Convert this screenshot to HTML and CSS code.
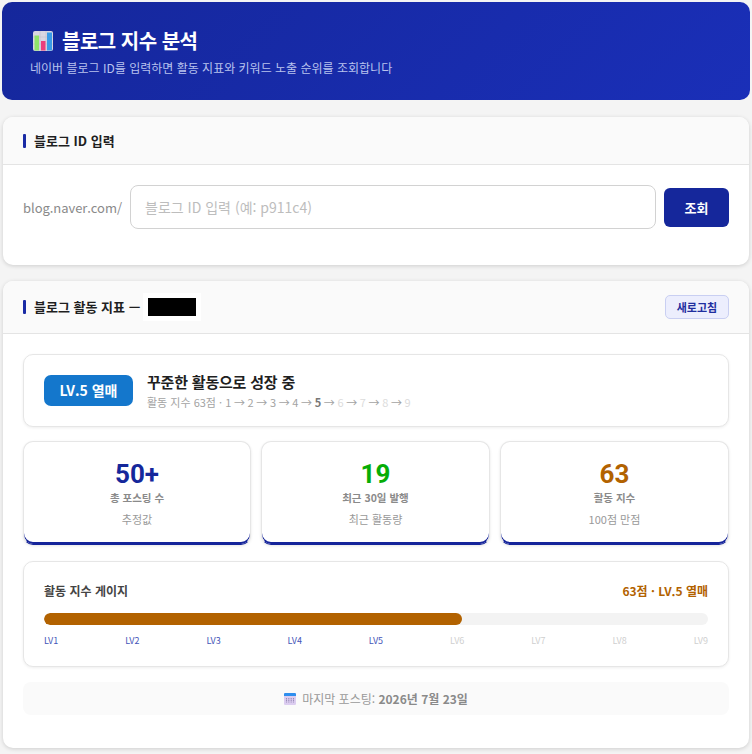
FILE: index.html
```html
<!DOCTYPE html>
<html lang="ko">
<head>
<meta charset="utf-8">
<title>블로그 지수 분석</title>
<link rel="stylesheet" href="styles.css">
</head>
<body>
<main class="page">
  <header class="banner">
    <h1 class="banner-title">
      <svg class="banner-icon" viewBox="0 0 20 20" aria-hidden="true">
        <rect x="0" y="0" width="20" height="20" rx="2" fill="#d9d6e2"/>
        <path d="M0 6h20M0 13h20M7 0v20M13 0v20" stroke="#c3bfce" stroke-width=".6"/>
        <rect x="1.5" y="4.5" width="4.5" height="15" fill="#8fe36a"/>
        <rect x="8" y="10" width="4.5" height="9.5" fill="#ec3f7c"/>
        <rect x="14" y="1.5" width="5" height="18" fill="#3a9be8"/>
      </svg>
      <span>블로그 지수 분석</span>
    </h1>
    <p class="banner-sub">네이버 블로그 ID를 입력하면 활동 지표와 키워드 노출 순위를 조회합니다</p>
  </header>

  <section class="card">
    <div class="card-head"><h2 class="card-title">블로그 ID 입력</h2></div>
    <div class="card-body search-row">
      <span class="prefix">blog.naver.com/</span>
      <input class="id-input" type="text" placeholder="블로그 ID 입력 (예: p911c4)">
      <button class="search-btn" type="button">조회</button>
    </div>
  </section>

  <section class="card">
    <div class="card-head tall">
      <h2 class="card-title">블로그 활동 지표 —</h2>
      <span class="redact"><span class="redact-fill"></span></span>
      <button class="refresh-btn" type="button">새로고침</button>
    </div>
    <div class="card-body result-body">
      <div class="panel level">
        <span class="level-badge">LV.5 열매</span>
        <div class="level-text">
          <div class="level-title">꾸준한 활동으로 성장 중</div>
          <div class="level-sub">활동 지수 63점 · <span class="steps">1 → 2 → 3 → 4 → <b>5</b> → <span class="off">6</span> → <span class="off">7</span> → <span class="off">8</span> → <span class="off">9</span></span></div>
        </div>
      </div>

      <div class="stats">
        <div class="stat">
          <div class="stat-num navy">50+</div>
          <div class="stat-label">총 포스팅 수</div>
          <div class="stat-note">추정값</div>
        </div>
        <div class="stat">
          <div class="stat-num green">19</div>
          <div class="stat-label">최근 30일 발행</div>
          <div class="stat-note">최근 활동량</div>
        </div>
        <div class="stat">
          <div class="stat-num amber">63</div>
          <div class="stat-label">활동 지수</div>
          <div class="stat-note">100점 만점</div>
        </div>
      </div>

      <div class="panel gauge">
        <div class="gauge-head">
          <span class="gauge-title">활동 지수 게이지</span>
          <span class="gauge-value">63점 · LV.5 열매</span>
        </div>
        <div class="gauge-track"><div class="gauge-fill" style="width:63%"></div></div>
        <div class="gauge-levels">
          <span class="on">LV1</span><span class="on">LV2</span><span class="on">LV3</span><span class="on">LV4</span><span class="on">LV5</span><span>LV6</span><span>LV7</span><span>LV8</span><span>LV9</span>
        </div>
      </div>

      <div class="last-post">
        <svg class="cal-icon" viewBox="0 0 12 12" aria-hidden="true">
          <rect x="0" y="0" width="12" height="12" rx="1.2" fill="#dccdf0"/>
          <path d="M0 1.2A1.2 1.2 0 0 1 1.2 0h9.6A1.2 1.2 0 0 1 12 1.2V3H0z" fill="#2f8fee"/>
          <path d="M2.5 5v4.5M4.8 5v4.5M7.2 5v4.5M9.5 5v4.5" stroke="#9a8cb8" stroke-width="1.1" stroke-dasharray="1.4 .5"/>
        </svg>
        <span>마지막 포스팅: <b>2026년 7월 23일</b></span>
      </div>
    </div>
  </section>
</main>
</body>
</html>
```
FILE: styles.css
```css
* { box-sizing: border-box; }
html, body { margin: 0; padding: 0; }
body {
  background: #f4f4f4;
  font-family: "Noto Sans CJK KR", "Noto Sans", sans-serif;
  color: #1f1f1f;
}
.page { padding: 2px 2px 0; height: 754px; overflow: hidden; }

.banner {
  height: 98px;
  padding: 25px 28px 0;
  border-radius: 10px;
  background: linear-gradient(135deg, #15279b, #1a2fb8);
  color: #fff;
}
.banner-title {
  display: flex;
  align-items: center;
  gap: 9px;
  margin: 0;
  padding-left: 3px;
  font-size: 20px;
  font-weight: 700;
  line-height: 28px;
  letter-spacing: -.5px;
}
.banner-icon { width: 20px; height: 20px; flex: none; }
.banner-sub {
  margin: 4px 0 0;
  font-size: 12px;
  line-height: 18px;
  color: #b9c3ee;
}

.card {
  margin: 16px 1px 0;
  background: #fff;
  border-radius: 10px;
  box-shadow: 0 1px 4px rgba(0,0,0,.16);
  overflow: hidden;
}
.banner + .card { margin-top: 17px; }
.card-head {
  display: flex;
  align-items: center;
  height: 48px;
  padding: 0 20px;
  background: #fafafa;
  border-bottom: 1px solid #e4e4e4;
}
.card-head.tall { height: 53px; }
.card-title {
  display: flex;
  align-items: center;
  gap: 8px;
  margin: 0;
  font-size: 13px;
  font-weight: 700;
  line-height: 14px;
  color: #1f1f1f;
}
.card-title::before {
  content: "";
  width: 3px;
  height: 14px;
  border-radius: 1px;
  background: #1a2ba5;
}
.card-body { padding: 20px; }

.search-row {
  display: flex;
  align-items: center;
  gap: 8px;
  padding-bottom: 36px;
}
.prefix { flex: none; width: 99px; font-size: 13px; letter-spacing: -.05px; color: #8a8a8a; white-space: nowrap; }
.id-input {
  flex: 1;
  min-width: 0;
  height: 44px;
  padding: 0 14px;
  border: 1px solid #d2d2d2;
  border-radius: 8px;
  background: #fff;
  font: 14px "Noto Sans CJK KR", "Noto Sans", sans-serif;
  outline: none;
}
.id-input::placeholder { color: #bdbdbd; }
.search-btn {
  width: 65px;
  height: 39px;
  border: 0;
  border-radius: 6px;
  background: #15279b;
  color: #fff;
  font: 700 13px "Noto Sans CJK KR", "Noto Sans", sans-serif;
}

.redact {
  display: block;
  margin-left: 3px;
  padding: 5px;
  background: #fff;
}
.redact-fill { display: block; width: 48px; height: 18px; background: #000; }
.refresh-btn {
  margin-left: auto;
  width: 64px;
  height: 24px;
  padding: 0;
  border: 1px solid #c9cff2;
  border-radius: 5px;
  background: #eceefd;
  color: #1f2f9f;
  font: 700 11px "Noto Sans CJK KR", "Noto Sans", sans-serif;
}

.result-body { height: 414px; padding-bottom: 0; }
.panel {
  background: #fff;
  border: 1px solid #e6e6e6;
  border-radius: 10px;
  box-shadow: 0 1px 3px rgba(0,0,0,.07);
}
.level {
  display: flex;
  align-items: center;
  gap: 14px;
  height: 73px;
  padding: 0 20px;
}
.level-badge {
  width: 89px;
  height: 31px;
  border-radius: 7px;
  background: #1477cc;
  color: #fff;
  font-size: 14px;
  font-weight: 700;
  line-height: 31px;
  text-align: center;
}
.level-text { padding-top: 1px; }
.level-title { font-size: 15px; font-weight: 700; line-height: 20px; letter-spacing: -.2px; }
.level-sub { font-size: 11px; line-height: 16px; margin-top: 2px; color: #a3a3a3; }
.steps { word-spacing: -.45px; }
.level-sub b { color: #777; }
.off { color: #dcdcdc; }

.stats {
  display: grid;
  grid-template-columns: 228fr 229fr 229fr;
  gap: 10px;
  margin-top: 14px;
}
.stat {
  height: 104px;
  padding-top: 17px;
  background: #fff;
  border: 1px solid #e6e6e6;
  border-bottom-color: #15249a;
  border-radius: 10px;
  box-shadow: inset 0 -2px 0 #15249a, 0 1px 3px rgba(0,0,0,.1);
  text-align: center;
}
.stat-num {
  font-family: Roboto, "Noto Sans", sans-serif;
  font-size: 26px;
  font-weight: 700;
  line-height: 30px;
}
.navy { color: #15279b; }
.green { color: #06ad06; }
.amber { color: #b26200; }
.stat-label { margin-top: 1px; font-size: 10.5px; font-weight: 700; line-height: 16px; color: #8a8a8a; }
.stat-note { margin-top: 5px; font-size: 11px; line-height: 16px; color: #999; }

.gauge {
  height: 106px;
  margin-top: 16px;
  padding: 20px 20px 0;
}
.gauge-head {
  display: flex;
  justify-content: space-between;
  font-size: 12px;
  font-weight: 700;
  line-height: 18px;
}
.gauge-title { color: #444; }
.gauge-value { color: #b26200; }
.gauge-track {
  height: 12px;
  margin-top: 13px;
  border-radius: 6px;
  background: #f3f3f3;
  overflow: hidden;
}
.gauge-fill { height: 100%; border-radius: 6px; background: #b26200; }
.gauge-levels {
  display: flex;
  justify-content: space-between;
  margin-top: 9px;
  font-size: 9px;
  line-height: 14px;
  color: #cfcfcf;
}
.gauge-levels .on { color: #4555b8; }

.last-post {
  display: flex;
  align-items: center;
  justify-content: center;
  gap: 6px;
  height: 33px;
  margin-top: 15px;
  border-radius: 8px;
  background: #fafafa;
  font-size: 12px;
  color: #999;
}
.last-post b { color: #8a8a8a; }
.cal-icon { width: 12px; height: 12px; flex: none; }
```
